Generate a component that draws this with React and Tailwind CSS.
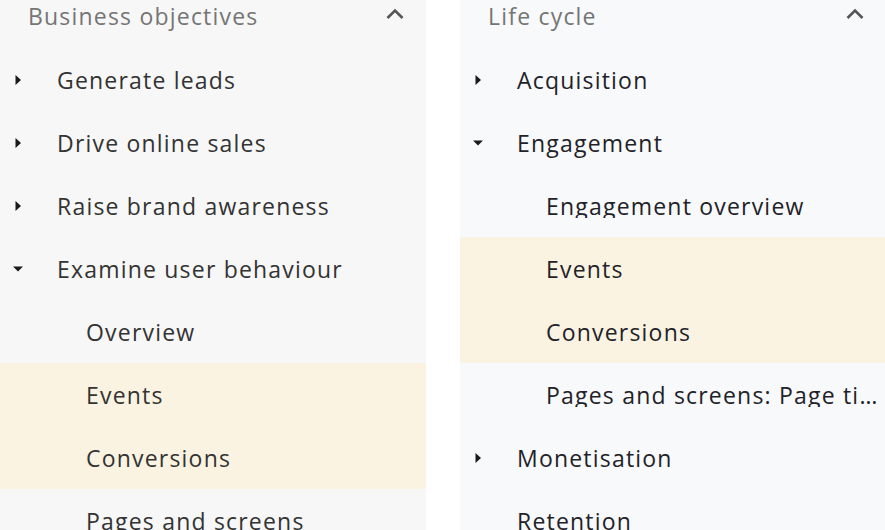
const Caret = ({ open }) => (
  <svg width="12" height="12" viewBox="0 0 12 12" className="shrink-0">
    {open ? <path d="M1 3.5h10L6 8.5z" fill="currentColor" /> : <path d="M3.5 1v10L9 6z" fill="currentColor" />}
  </svg>
);

const ChevronUp = () => (
  <svg width="22" height="22" viewBox="0 0 22 22" className="shrink-0">
    <path d="M3.5 15l7.5-7.5 7.5 7.5" fill="none" stroke="currentColor" strokeWidth="2.6" />
  </svg>
);

const Row = ({ label, level, open, active, noCaret }) => (
  <div className={`h-[63px] flex items-center ${active ? 'bg-[#fbf3e1]' : ''}`}>
    {level === 1 ? (
      <>
        <div className="w-[57px] pl-[12px] text-[#1a1a1a]">{!noCaret && <Caret open={open} />}</div>
        <span className="whitespace-nowrap">{label}</span>
      </>
    ) : (
      <span className="pl-[86px] pr-[4px] truncate">{label}</span>
    )}
  </div>
);

const Panel = ({ title, items, dark }) => (
  <div
    className={`w-[426px] shrink-0 overflow-hidden ${dark ? 'bg-[#f8f9fb] text-[#1f2229]' : 'bg-[#f7f7f7] text-[#333333]'}`}
  >
    <div className="h-[48px] flex items-start justify-between pl-[28px] pr-[20px] pt-[4px]">
      <span className="text-[#757575]">{title}</span>
      <span className="text-[#555555] -mt-[1px]">
        <ChevronUp />
      </span>
    </div>
    {items.map((it, i) => (
      <Row key={i} {...it} />
    ))}
  </div>
);

export default function App() {
  const left = [
    { label: 'Generate leads', level: 1 },
    { label: 'Drive online sales', level: 1 },
    { label: 'Raise brand awareness', level: 1 },
    { label: 'Examine user behaviour', level: 1, open: true },
    { label: 'Overview', level: 2 },
    { label: 'Events', level: 2, active: true },
    { label: 'Conversions', level: 2, active: true },
    { label: 'Pages and screens', level: 2 },
  ];
  const right = [
    { label: 'Acquisition', level: 1 },
    { label: 'Engagement', level: 1, open: true },
    { label: 'Engagement overview', level: 2 },
    { label: 'Events', level: 2, active: true },
    { label: 'Conversions', level: 2, active: true },
    { label: 'Pages and screens: Page title and screen class', level: 2 },
    { label: 'Monetisation', level: 1 },
    { label: 'Retention', level: 1, noCaret: true },
  ];
  return (
    <div
      className="w-[885px] h-[530px] overflow-hidden bg-white flex gap-[34px] text-[23px] leading-[24px] tracking-[1.2px]"
      style={{ fontFamily: '"Open Sans", "Liberation Sans", sans-serif' }}
    >
      <Panel title="Business objectives" items={left} />
      <Panel title="Life cycle" items={right} dark />
    </div>
  );
}
